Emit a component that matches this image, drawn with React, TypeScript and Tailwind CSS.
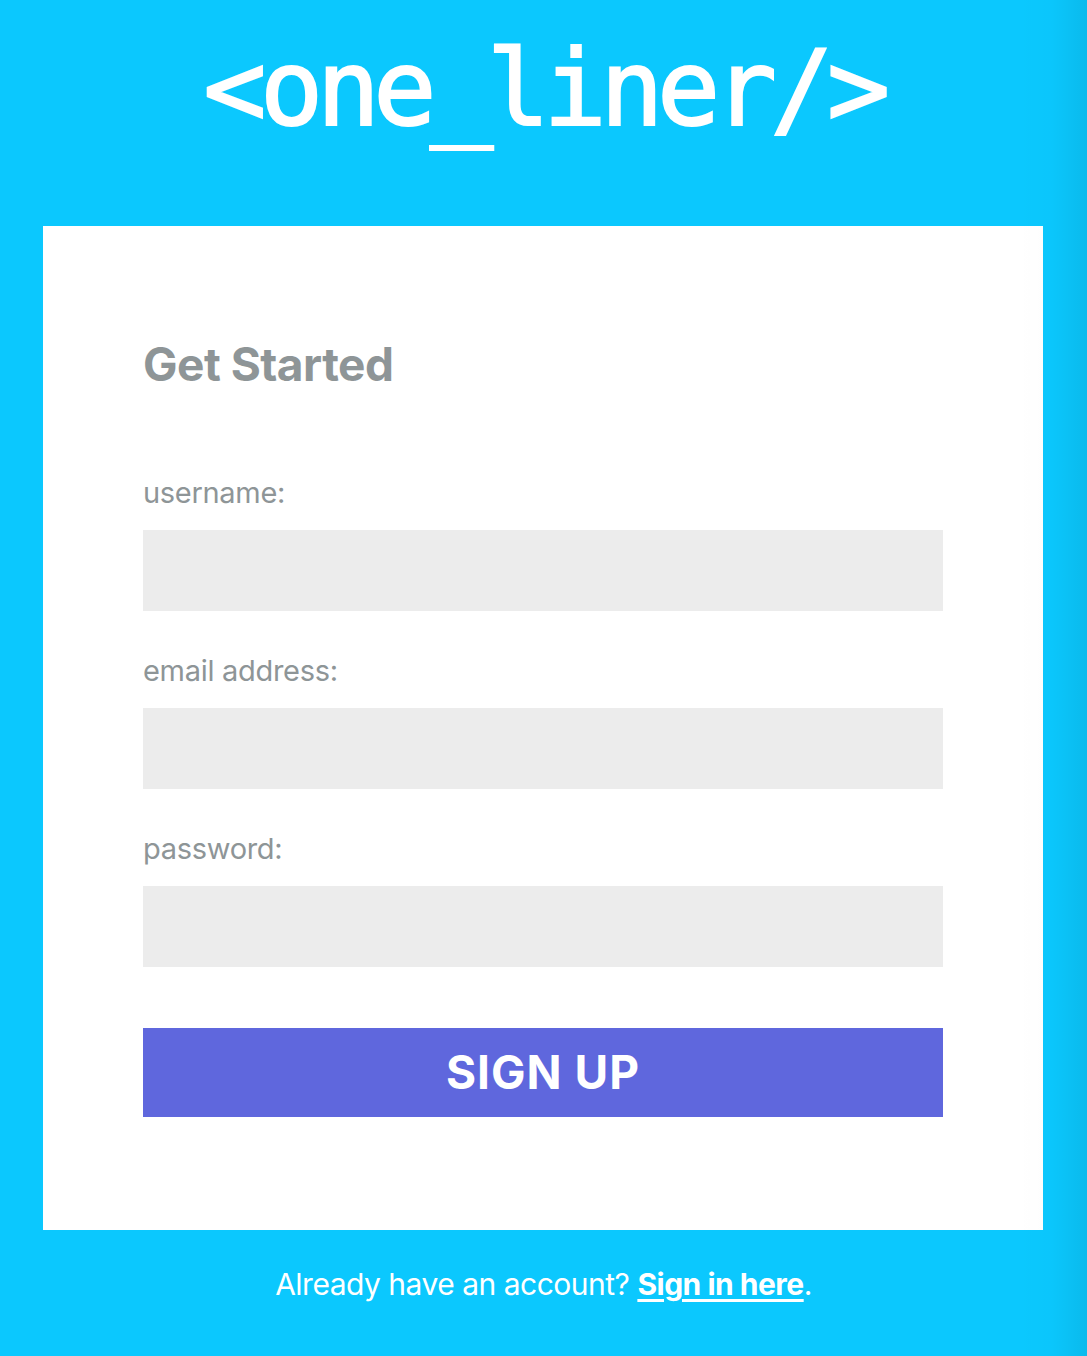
export default function App() {
  const fields = [
    { id: "username", label: "username:", type: "text" },
    { id: "email", label: "email address:", type: "email" },
    { id: "password", label: "password:", type: "password" },
  ];

  return (
    <div className="relative min-h-screen bg-[#0bc8fe] font-['Inter',sans-serif] overflow-hidden">
      <header className="h-[226px] pt-[37px] text-center">
        <h1 className="font-['DejaVu_Sans_Mono',monospace] text-[105px] leading-none tracking-[-6.5px] text-white [-webkit-text-stroke:2px_white]">
          &lt;one_liner/&gt;
        </h1>
      </header>

      <main className="ml-[43px] w-[1000px] bg-white px-[100px] pt-[115px] pb-[113px]">
        <h2 className="text-[46px] leading-none font-bold tracking-[-0.5px] text-[#8e9597]">Get Started</h2>

        <form className="flex flex-col" onSubmit={(e) => e.preventDefault()}>
          {fields.map((f, i) => (
            <div key={f.id} className={i === 0 ? "mt-[91px] flex flex-col" : "mt-[45px] flex flex-col"}>
              <label htmlFor={f.id} className="text-[29px] leading-none tracking-[-0.3px] text-[#8e9597]">
                {f.label}
              </label>
              <input
                id={f.id}
                type={f.type}
                className="mt-[23px] h-[81px] w-full bg-[#ececec] px-4 text-[24px] outline-none"
              />
            </div>
          ))}

          <button
            type="submit"
            className="mt-[61px] flex h-[89px] w-full items-center justify-center bg-[#5f67dd] text-[46px] font-bold tracking-[1px] text-white"
          >
            SIGN UP
          </button>
        </form>
      </main>

      <p className="mt-[39px] text-center text-[30px] leading-none tracking-[-0.5px] text-white">
        Already have an account?{" "}
        <a href="#" className="font-bold underline underline-offset-4 decoration-[3px]">
          Sign in here
        </a>
        .
      </p>

      <div className="pointer-events-none absolute right-0 top-0 h-full w-[70px] bg-linear-to-r from-transparent via-black/[0.01] to-black/[0.07]" />
    </div>
  );
}
